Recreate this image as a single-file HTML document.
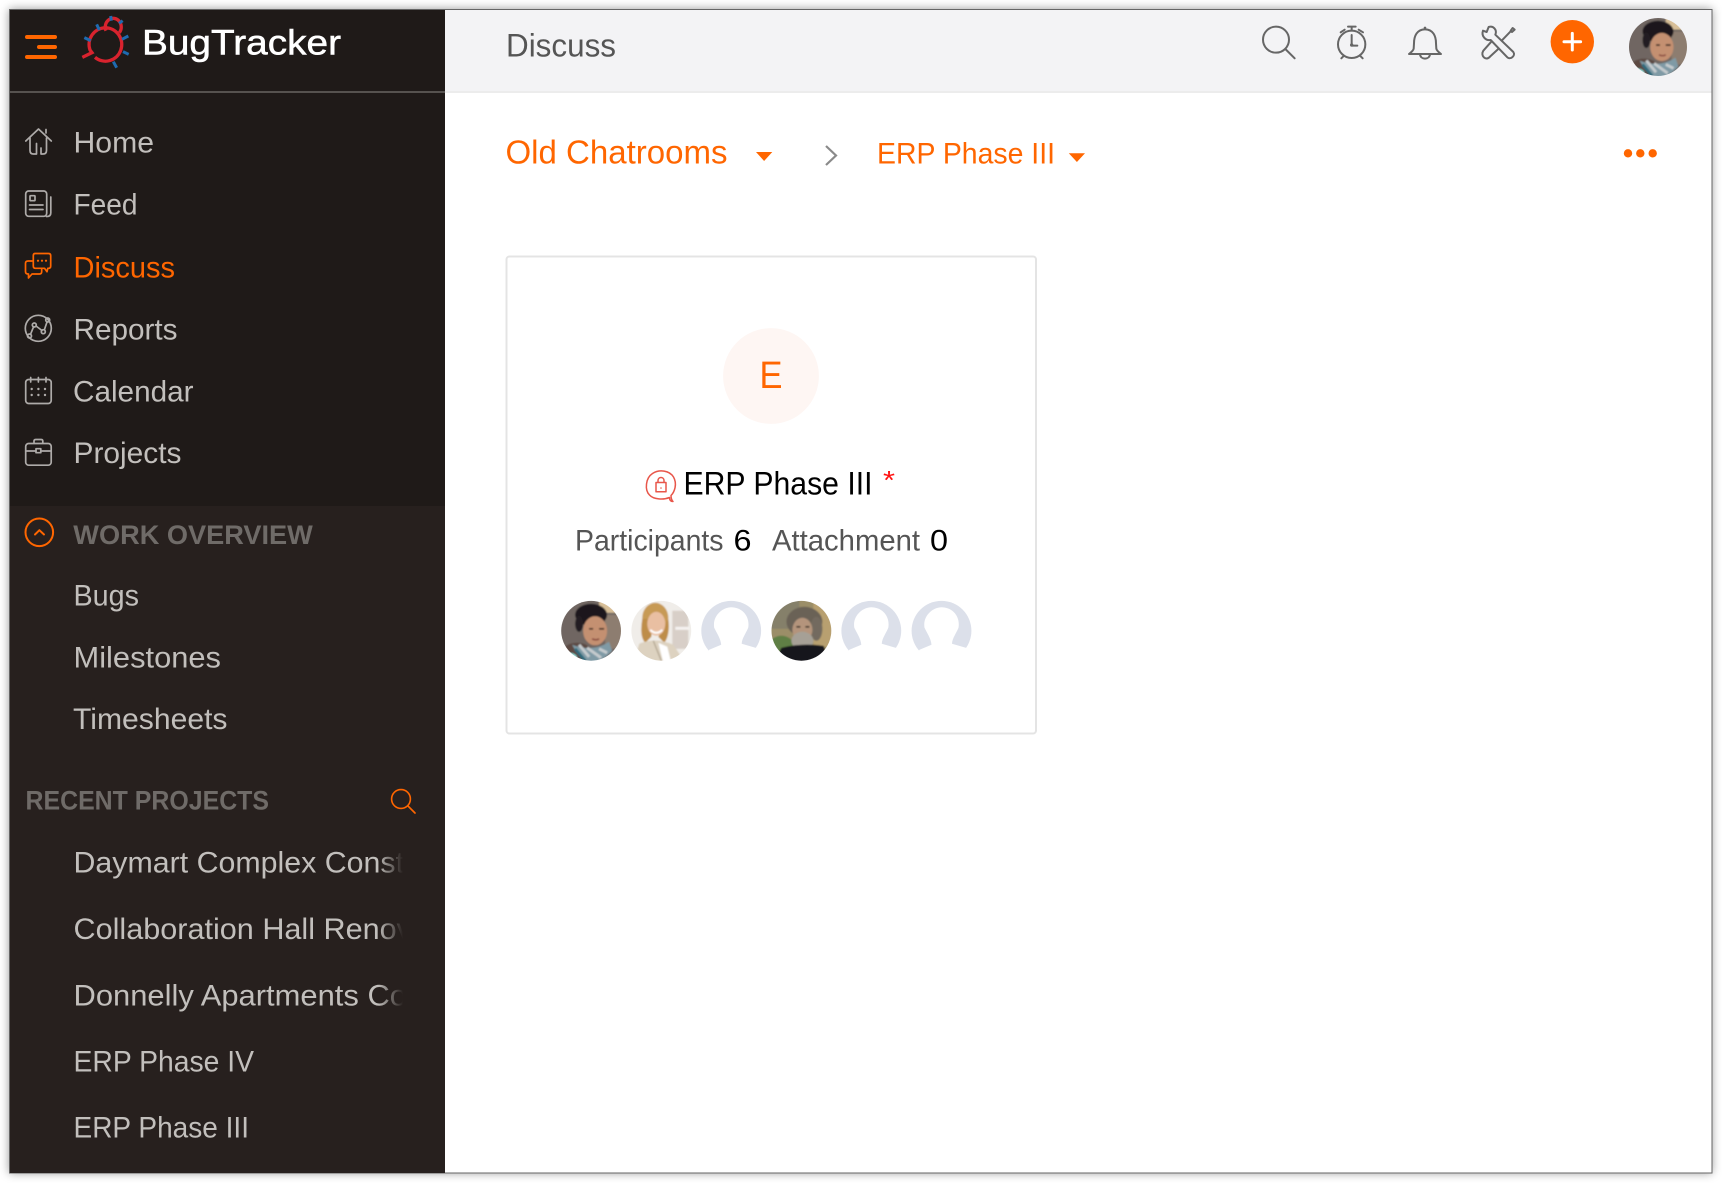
<!DOCTYPE html>
<html lang="en"><head><meta charset="utf-8"><title>BugTracker - Discuss</title>
<style>
html,body{margin:0;padding:0;background:#fff;width:1722px;height:1183px;overflow:hidden}
#frame{position:absolute;left:9px;top:9px;width:1703px;height:1164px;box-shadow:0 0 9px rgba(0,0,0,.4);background:#fff}
svg{position:absolute;left:0;top:0}
text{font-family:"Liberation Sans",sans-serif}
.m{font-size:30px;fill:#c2bfbc}
.b{font-size:27px;font-weight:700;fill:#6f6b68}
.o{fill:#f60}
</style></head><body>
<div id="frame"></div>
<svg width="1722" height="1183" viewBox="0 0 1722 1183" xmlns="http://www.w3.org/2000/svg">
<defs>
<clipPath id="sideclip"><rect x="60" y="840" width="343" height="180"/></clipPath>
<linearGradient id="fade" x1="0" x2="1" y1="0" y2="0"><stop offset="0" stop-color="#27201e" stop-opacity="0"/><stop offset="1" stop-color="#27201e"/></linearGradient>
<clipPath id="c1"><circle cx="0" cy="0" r="29.9"/></clipPath>
<filter id="bl" x="-10%" y="-10%" width="120%" height="120%"><feGaussianBlur stdDeviation=".9"/></filter>
<g id="woman"><g clip-path="url(#c1)"><g filter="url(#bl)">
<rect x="-32" y="-32" width="64" height="64" fill="#6f6662"/>
<rect x="8" y="-32" width="24" height="14" fill="#d8bf98"/>
<rect x="14" y="-16" width="18" height="34" fill="#8d7d70"/>
<ellipse cx="-14" cy="22" rx="15" ry="10" fill="#5b4a42"/>
<ellipse cx="0" cy="-16" rx="16" ry="11" fill="#1c191c"/>
<ellipse cx="-12" cy="-7" rx="4" ry="8" fill="#231e20"/>
<ellipse cx="4" cy="0" rx="12" ry="14.5" fill="#c49071"/>
<path d="M-2-2h4M8-2h5" stroke="#3a2a24" stroke-width="1.6"/>
<path d="M1 8q4 2 7 0" stroke="#8a4c40" stroke-width="1.6" fill="none"/>
<path d="M-19 14 Q2 22 18 11 L21 20 Q10 32 -2 32 Q-14 24 -19 14Z" fill="#7f9aa5"/>
<path d="M-12 14 L-2 26 M-4 17 L10 27 M8 18 L16 22" stroke="#c5cbce" stroke-width="3"/>
<path d="M-16 18 L-6 30" stroke="#2f6b7c" stroke-width="3"/>
<ellipse cx="-22" cy="27" rx="8" ry="5" fill="#8ed6d0"/>
</g></g></g>
<g id="blank"><circle cx="0" cy="0" r="29.9" fill="#dce0ea"/>
<path d="M-22 19 L-10 14 C-10.5 8 -14 3 -17 -3 C-19 -15 -8.5 -23.5 0 -23.5 C10.5 -23.5 19 -15 17 -3 C14 4 10.5 8 10.5 13 L26 17.5 L34 40 L-34 40Z" fill="#fff"/></g>
</defs>

<!-- frame -->
<rect x="9.5" y="9.5" width="1702.5" height="1163.5" fill="#fff" stroke="#666" stroke-width="1"/>
<!-- header -->
<rect x="445" y="10" width="1266.5" height="81" fill="#f3f3f5"/>
<rect x="445" y="91" width="1266.5" height="2" fill="#ececec"/>
<!-- sidebar -->
<rect x="10" y="10" width="435" height="496" fill="#1f1a18"/>
<rect x="10" y="506" width="435" height="667" fill="#27201e"/>
<rect x="10" y="91" width="435" height="2" fill="#56524f"/>

<!-- hamburger -->
<g stroke="#f60" stroke-width="4" stroke-linecap="round"><path d="M27 37H55M39 47H55M27 57H55"/></g>
<!-- logo -->
<g transform="scale(.33333)" fill="none">
<path d="M285 172 A49 50 0 1 0 270 150 L276 158 L247 172" stroke="#d9232e" stroke-width="10"/>
<path d="M318 92 A24 26 0 1 1 358 98" stroke="#d9232e" stroke-width="10"/>
<g stroke="#1f6bb0" stroke-width="9"><path d="M290 73L298 90M332 48L334 62M368 62L357 70M385 108L366 118M386 163L369 155M350 203L340 185M253 113L272 122"/></g>
</g>
<text x="142" y="54.5" font-size="35" fill="#fff" stroke="#fff" stroke-width=".5" textLength="199" lengthAdjust="spacingAndGlyphs">BugTracker</text>
<text x="506" y="56.5" font-size="32" fill="#555" textLength="110" lengthAdjust="spacingAndGlyphs">Discuss</text>

<!-- side menu icons -->
<g fill="none" stroke="#aeaba9" stroke-width="1.7" stroke-linecap="round" stroke-linejoin="round">
<path d="M25.8 141L38.5 129 51.3 141M46 133V129.5M30 138V150.5Q30 154 33.5 154H36.5V143.5M46.5 138V150.5Q46.5 154 43 154H41V148"/>
<rect x="25.7" y="191" width="21" height="25.3" rx="3"/>
<rect x="30" y="195.7" width="5" height="5" rx=".7"/>
<path d="M29.5 205H43M29.5 209.5H43M50.8 197V213Q50.8 216.5 46.5 216.5"/>
<g><circle cx="38.3" cy="328.3" r="13"/>
<path d="M30.5 334.3L33.6 326.8M36 326L42 330.5M44.3 330L47 322"/>
<circle cx="29.5" cy="336" r="2"/><circle cx="34.3" cy="325" r="2"/><circle cx="43.3" cy="331.7" r="2"/><circle cx="47.7" cy="320" r="2"/></g>
<rect x="25.7" y="379.5" width="25.5" height="24" rx="3"/>
<path d="M30.7 377.5V382M38.4 377.5V382M46 377.5V382"/>
<rect x="25.7" y="443.5" width="25.5" height="21.7" rx="3"/>
<path d="M34 443V441Q34 439.5 36 439.5H41Q42.8 439.5 42.8 441V443M25.7 451H36M41 451H51.2"/>
<rect x="36" y="448.7" width="4.8" height="4" />
</g>
<g fill="#aeaba9"><circle cx="31.7" cy="389" r="1.2"/><circle cx="38.4" cy="389" r="1.2"/><circle cx="45" cy="389" r="1.2"/><circle cx="31.7" cy="395" r="1.2"/><circle cx="38.4" cy="395" r="1.2"/><circle cx="45" cy="395" r="1.2"/></g>
<!-- discuss icon -->
<g fill="none" stroke="#f60" stroke-width="1.7" stroke-linejoin="round" stroke-linecap="round">
<path d="M35 253.5H48.5Q50.7 253.5 50.7 255.7V266Q50.7 268.3 48.5 268.3H47.8L47 271.7L44.5 268.3H35.5Q33.3 268.3 33.3 266V255.7Q33.3 253.5 35 253.5Z"/>
<path d="M32 261H28Q25.5 261 25.5 263.5V271.5Q25.5 274 28 274H28.5V278L32 274H39.5Q41.7 274 41.7 271.5V269.5"/>
</g>
<g fill="#f60"><circle cx="38" cy="260.7" r="1.1"/><circle cx="42" cy="260.7" r="1.1"/><circle cx="46" cy="260.7" r="1.1"/></g>

<!-- side menu text -->
<text class="m" x="73.5" y="152.5" textLength="80.5" lengthAdjust="spacingAndGlyphs">Home</text>
<text class="m" x="73.5" y="214.3" textLength="64" lengthAdjust="spacingAndGlyphs">Feed</text>
<text class="m o" style="fill:#f60" x="73.5" y="277.3" textLength="101.5" lengthAdjust="spacingAndGlyphs">Discuss</text>
<text class="m" x="73.5" y="339.7" textLength="104" lengthAdjust="spacingAndGlyphs">Reports</text>
<text class="m" x="73" y="401.5" textLength="120.5" lengthAdjust="spacingAndGlyphs">Calendar</text>
<text class="m" x="73.5" y="463" textLength="108" lengthAdjust="spacingAndGlyphs">Projects</text>

<circle cx="39.3" cy="532.3" r="13.8" fill="none" stroke="#f60" stroke-width="2"/>
<path d="M35 534.5L39.4 530.2 44 534.5" fill="none" stroke="#f60" stroke-width="2" stroke-linecap="round" stroke-linejoin="round"/>
<text class="b" x="73.3" y="544" textLength="239.5" lengthAdjust="spacingAndGlyphs">WORK OVERVIEW</text>
<text class="m" x="73.5" y="605.3" textLength="65.5" lengthAdjust="spacingAndGlyphs">Bugs</text>
<text class="m" x="73.5" y="667.3" textLength="147.5" lengthAdjust="spacingAndGlyphs">Milestones</text>
<text class="m" x="73" y="728.8" textLength="154.5" lengthAdjust="spacingAndGlyphs">Timesheets</text>

<text class="b" x="25.5" y="809.3" textLength="243.5" lengthAdjust="spacingAndGlyphs">RECENT PROJECTS</text>
<circle cx="401" cy="799" r="9.4" fill="none" stroke="#f60" stroke-width="1.6"/>
<path d="M407.8 805.8L415 813" stroke="#f60" stroke-width="1.7" stroke-linecap="round"/>

<g clip-path="url(#sideclip)">
<text class="m" x="73.5" y="872.5" textLength="330.5" lengthAdjust="spacingAndGlyphs">Daymart Complex Const</text>
<text class="m" x="73.5" y="938.8" textLength="338.5" lengthAdjust="spacingAndGlyphs">Collaboration Hall Renov</text>
<text class="m" x="73.5" y="1005.5" textLength="333.5" lengthAdjust="spacingAndGlyphs">Donnelly Apartments Co</text>
</g>
<rect x="378" y="840" width="25" height="180" fill="url(#fade)"/>
<rect x="403" y="840" width="20" height="180" fill="#27201e"/>
<text class="m" x="73.5" y="1071.5" textLength="180.5" lengthAdjust="spacingAndGlyphs">ERP Phase IV</text>
<text class="m" x="73.5" y="1137.5" textLength="175.5" lengthAdjust="spacingAndGlyphs">ERP Phase III</text>

<!-- header icons, drawn in 3x coordinates -->
<g transform="translate(1220,0) scale(.33333)" fill="none" stroke="#666" stroke-width="6" stroke-linecap="round" stroke-linejoin="round">
<circle cx="168" cy="119" r="39"/><path d="M196 147L224 175"/>
<circle cx="395" cy="133" r="41"/>
<path d="M384 80H407M395 80V92M362 97L374 89M429 97L416 89M364 175L372 167M428 175L420 167"/>
<path d="M395 105V137H412" stroke-width="6"/><circle cx="395" cy="135" r="5" fill="#666" stroke="none"/>
<path d="M615 88C591 88 582 108 582 130L581 146C580 152 572 158 567 162H663C658 158 650 152 649 146L648 130C648 108 639 88 615 88Z"/>
<circle cx="615" cy="84" r="4" fill="#666" stroke="none"/>
<path d="M600 163C602 180 628 180 630 163"/>
<path d="M806 81L800 96 789 92C783 108 797 123 812 120L862 172C870 180 888 168 880 156L826 104C832 90 820 76 806 81Z"/>
<path d="M872 92L878 84 884 89 876 96ZM872 94L846 121"/>
<path d="M815 124L790 152C780 168 798 184 810 170L836 146"/>
</g>
<circle cx="1572.3" cy="41.7" r="21.7" fill="#f60"/>
<path d="M1564 41.7H1580.6M1572.3 33.4V50" stroke="#fff" stroke-width="3" stroke-linecap="round"/>
<use href="#woman" transform="translate(1658,47) scale(.97)"/>

<!-- breadcrumb -->
<text x="505.5" y="163.3" font-size="33" class="o" textLength="222" lengthAdjust="spacingAndGlyphs">Old Chatrooms</text>
<path d="M756 152H772.3L764.1 161Z" fill="#f60"/>
<path d="M826 146L836 155.5 826 165" fill="none" stroke="#8a8a8a" stroke-width="2.2"/>
<text x="877" y="163.3" font-size="30" class="o" textLength="178" lengthAdjust="spacingAndGlyphs">ERP Phase III</text>
<path d="M1068.8 153.3H1085L1076.9 162Z" fill="#f60"/>
<g fill="#f60"><circle cx="1628" cy="153.3" r="4.2"/><circle cx="1640.3" cy="153.3" r="4.2"/><circle cx="1652.7" cy="153.3" r="4.2"/></g>

<!-- card -->
<rect x="506.5" y="256.5" width="529.5" height="477" rx="3" fill="#fff" stroke="#e4e4e4" stroke-width="2"/>
<circle cx="771" cy="376" r="47.9" fill="#fef6f3"/>
<text x="759.5" y="388" font-size="38" class="o" textLength="23" lengthAdjust="spacingAndGlyphs">E</text>

<g transform="translate(7.5,0)">
<g fill="none" stroke="#e8564a" stroke-width="1.5" stroke-linejoin="round">
<path d="M662 497.5C656 500 646 499.5 642 495C637 490 638 478 645 473.5C652 469 662 470.5 666 477C670 484 667 492 663.5 495.5C663.5 498 664 500 665.5 501.5C663 501.5 662 500 662 497.5Z"/>
<rect x="648.5" y="482.5" width="10" height="9.2"/>
<path d="M650.5 482.5V480.5C650.5 476.5 656.5 476.5 656.5 480.5V482.5"/>
</g>
<circle cx="653.5" cy="488" r=".8" fill="#e8564a"/>
</g>

<text x="683.5" y="494.3" font-size="32" fill="#000" textLength="189" lengthAdjust="spacingAndGlyphs">ERP Phase III</text>
<text x="883" y="489" font-size="26" fill="#f11" textLength="12" lengthAdjust="spacingAndGlyphs">*</text>

<text x="575" y="550.7" font-size="30" fill="#555" textLength="148.5" lengthAdjust="spacingAndGlyphs">Participants</text>
<text x="733.5" y="550.7" font-size="30" fill="#000" textLength="18" lengthAdjust="spacingAndGlyphs">6</text>
<text x="772" y="550.7" font-size="30" fill="#555" textLength="148" lengthAdjust="spacingAndGlyphs">Attachment</text>
<text x="930" y="550.7" font-size="30" fill="#000" textLength="18" lengthAdjust="spacingAndGlyphs">0</text>

<!-- avatars -->
<use href="#woman" transform="translate(591.1,630.8)"/>
<g transform="translate(661.3,630.8)"><g clip-path="url(#c1)"><g filter="url(#bl)">
<rect x="-32" y="-32" width="64" height="64" fill="#f0ede9"/>
<rect x="11" y="-20" width="16" height="38" fill="#d8cfc8"/>
<rect x="14" y="-4" width="14" height="3" fill="#f5f3f1"/>
<ellipse cx="-6" cy="-13" rx="13" ry="15" fill="#c79a55"/>
<path d="M-19-12Q-22 6-16 12L-10 6-8-12Z" fill="#be8d48"/>
<path d="M7-12Q9 4 3 12L-3 6Z" fill="#be8d48"/>
<ellipse cx="-5" cy="-7" rx="9" ry="12" fill="#e9bfa2"/>
<path d="M-11-1Q-5 5 1-1" stroke="#fff" stroke-width="2" fill="none"/>
<path d="M-28 32L-22 13Q-6 6 12 14L24 32Z" fill="#ddd2c0"/>
<path d="M-3 12L2 32H10L6 16Z" fill="#fff"/>
<path d="M-8 10L0 30" stroke="#b6aa96" stroke-width="1.4"/>
</g></g></g>
<use href="#blank" transform="translate(731.2,630.8)"/>
<g transform="translate(801.4,630.8)"><g clip-path="url(#c1)"><g filter="url(#bl)">
<rect x="-32" y="-32" width="64" height="64" fill="#9b8e68"/>
<rect x="-32" y="-32" width="30" height="30" fill="#85806a"/>
<rect x="12" y="-28" width="20" height="44" fill="#b8a070"/>
<ellipse cx="-20" cy="14" rx="12" ry="9" fill="#5f7f44"/>
<ellipse cx="3" cy="-9" rx="18" ry="15" fill="#6a6256"/>
<ellipse cx="15" cy="-2" rx="6" ry="12" fill="#736b5e"/>
<ellipse cx="1" cy="-1" rx="10" ry="12" fill="#b4947c"/>
<ellipse cx="1" cy="10" rx="11" ry="9" fill="#a6a096"/>
<path d="M-5-4H-1M4-4H8" stroke="#3b2e28" stroke-width="1.6"/>
<path d="M-28 32L-20 17Q0 12 22 15L30 32Z" fill="#14151a"/>
</g></g></g>
<use href="#blank" transform="translate(871.3,630.8)"/>
<use href="#blank" transform="translate(941.5,630.8)"/>
</svg>
</body></html>
